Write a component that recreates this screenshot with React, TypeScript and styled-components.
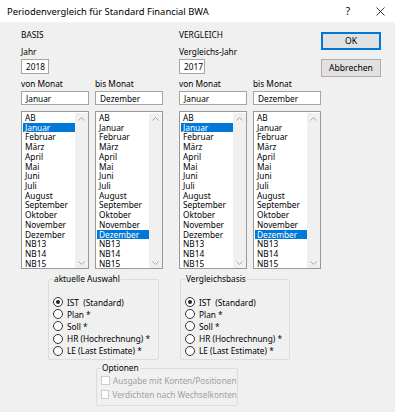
import React from "react";
import styled, { createGlobalStyle } from "styled-components";

const months = [
  "AB",
  "Januar",
  "Februar",
  "März",
  "April",
  "Mai",
  "Juni",
  "Juli",
  "August",
  "September",
  "Oktober",
  "November",
  "Dezember",
  "NB13",
  "NB14",
  "NB15",
];

const bases = [
  "IST  (Standard)",
  "Plan *",
  "Soll *",
  "HR (Hochrechnung) *",
  "LE (Last Estimate) *",
];

const GlobalStyle = createGlobalStyle`
  html, body {
    margin: 0;
    padding: 0;
    background: #f0f0f0;
  }
  body {
    font-family: "Noto Sans", "Liberation Sans", sans-serif;
    color: #000;
  }
`;

const Dialog = styled.div`
  width: 395px;
  height: 412px;
  background: #f0f0f0;
  overflow: hidden;
  font-size: 8.3px;
`;

const TitleBar = styled.div`
  height: 22px;
  background: #fff;
  display: flex;
  align-items: center;
`;

const Title = styled.div`
  flex: 1;
  padding-left: 7px;
  font-size: 9.4px;
`;

const TitleButton = styled.div<{ $w: number }>`
  width: ${({ $w }) => $w}px;
  height: 22px;
  display: flex;
  align-items: center;
  justify-content: center;
  font-size: 10px;
`;

const Body = styled.div`
  padding: 7px 0 0 21px;
`;

const Top = styled.div`
  display: flex;
`;

const Section = styled.div`
  width: 141px;
  display: flex;
  flex-direction: column;

  & + & {
    margin-left: 17px;
  }
`;

const Label = styled.div`
  height: 12px;
  line-height: 12px;
  white-space: nowrap;
`;

const Pair = styled.div`
  display: flex;
  gap: 6px;
`;

const Field = styled.div`
  width: 68px;
`;

const TextBox = styled.div<{ $w?: number; $h?: number }>`
  box-sizing: border-box;
  width: ${({ $w }) => ($w ? `${$w}px` : "68px")};
  height: ${({ $h }) => ($h ? `${$h}px` : "14px")};
  background: #fff;
  border: 1px solid #a5a5a5;
  padding-left: 4px;
  display: flex;
  align-items: center;
  margin-top: 1px;
`;

const Caret = styled.span`
  display: inline-block;
  width: 1px;
  height: 10px;
  background: #000;
  margin-left: 1px;
`;

const ListBox = styled.div`
  box-sizing: border-box;
  width: 68px;
  height: 158px;
  margin-top: 6px;
  background: #fff;
  border: 1px solid #999;
  display: flex;
  padding: 1px 0 0 1px;
`;

const Items = styled.div`
  flex: 1;
`;

const Item = styled.div<{ $selected?: boolean }>`
  height: 9.73px;
  line-height: 9.73px;
  padding-left: 2px;
  white-space: nowrap;
  background: ${({ $selected }) => ($selected ? "#0078d7" : "transparent")};
  color: ${({ $selected }) => ($selected ? "#fff" : "#000")};
`;

const ScrollBar = styled.div`
  width: 13px;
  background: #f0f0f0;
  display: flex;
  flex-direction: column;
  justify-content: space-between;
  align-items: center;
  padding: 4px 0 3px;
`;

const Buttons = styled.div`
  display: flex;
  flex-direction: column;
  gap: 9px;
  padding-top: 3px;
  margin-left: 1px;
`;

const Button = styled.div<{ $default?: boolean }>`
  box-sizing: border-box;
  width: 60px;
  height: 18px;
  display: flex;
  align-items: center;
  justify-content: center;
  background: #e1e1e1;
  border: 1px solid ${({ $default }) => ($default ? "#0078d7" : "#adadad")};
  box-shadow: ${({ $default }) => ($default ? "inset 0 0 0 1px #0078d7" : "none")};
  font-size: 8.6px;
`;

const GroupRow = styled.div`
  display: flex;
  gap: 21px;
  margin: 4px 0 0 27px;
`;

const Group = styled.fieldset<{ $w: number; $h: number }>`
  box-sizing: border-box;
  width: ${({ $w }) => $w}px;
  height: ${({ $h }) => $h}px;
  margin: 0;
  padding: 0 0 0 4px;
  border: 1px solid #dcdcdc;
  border-radius: 2px;
  min-inline-size: 0;

  legend {
    padding: 0 1px;
    margin-left: 0;
    line-height: 12px;
    font-size: 8.3px;
    color: #000;
  }
`;

const RadioList = styled.div`
  padding-top: 11px;
`;

const RadioRow = styled.div`
  height: 12.2px;
  display: flex;
  align-items: center;
  gap: 4px;
  white-space: pre;
`;

const Radio = styled.span<{ $checked?: boolean }>`
  box-sizing: border-box;
  width: 10px;
  height: 10px;
  border-radius: 50%;
  border: 1px solid #333;
  background: #fff;
  display: flex;
  align-items: center;
  justify-content: center;

  &::after {
    content: "";
    width: 4px;
    height: 4px;
    border-radius: 50%;
    background: ${({ $checked }) => ($checked ? "#222" : "transparent")};
  }
`;

const Options = styled.div`
  margin: 2px 0 0 75px;
`;

const CheckRow = styled.div`
  height: 13.5px;
  display: flex;
  align-items: center;
  gap: 3px;
  color: #a0a0a0;
  white-space: nowrap;
`;

const CheckBox = styled.span`
  box-sizing: border-box;
  width: 9px;
  height: 9px;
  border: 1px solid #cccccc;
  background: #fff;
`;

const Chevron = ({ up }: { up?: boolean }) => (
  <svg width="7" height="4" viewBox="0 0 7 4">
    <path
      d={up ? "M0.5 3.5 L3.5 0.5 L6.5 3.5" : "M0.5 0.5 L3.5 3.5 L6.5 0.5"}
      fill="none"
      stroke="#a6a6a6"
      strokeWidth="1"
    />
  </svg>
);

const MonthList = ({ selected }: { selected: string }) => (
  <ListBox>
    <Items>
      {months.map((m) => (
        <Item key={m} $selected={m === selected}>
          {m}
        </Item>
      ))}
    </Items>
    <ScrollBar>
      <Chevron up />
      <Chevron />
    </ScrollBar>
  </ListBox>
);

const Column = ({
  title,
  yearLabel,
  year,
  caret,
}: {
  title: string;
  yearLabel: string;
  year: string;
  caret?: boolean;
}) => (
  <Section>
    <Label>{title}</Label>
    <Label style={{ marginTop: 5 }}>{yearLabel}</Label>
    <TextBox $w={caret ? 26 : 28} $h={15}>
      {year}
      {caret && <Caret />}
    </TextBox>
    <Pair style={{ marginTop: 4 }}>
      <Field>
        <Label>von Monat</Label>
        <TextBox>Januar</TextBox>
        <MonthList selected="Januar" />
      </Field>
      <Field>
        <Label>bis Monat</Label>
        <TextBox>Dezember</TextBox>
        <MonthList selected="Dezember" />
      </Field>
    </Pair>
  </Section>
);

const RadioGroup = ({ legend, w }: { legend: string; w: number }) => (
  <Group $w={w} $h={87}>
    <legend>{legend}</legend>
    <RadioList>
      {bases.map((b, i) => (
        <RadioRow key={b}>
          <Radio $checked={i === 0} />
          {b}
        </RadioRow>
      ))}
    </RadioList>
  </Group>
);

const App: React.FC = () => (
  <>
    <GlobalStyle />
    <Dialog>
      <TitleBar>
        <Title>Periodenvergleich für Standard Financial BWA</Title>
        <TitleButton $w={34}>?</TitleButton>
        <TitleButton $w={30}>
          <svg width="9" height="9" viewBox="0 0 9 9">
            <path d="M0.5 0.5 L8.5 8.5 M8.5 0.5 L0.5 8.5" stroke="#222" strokeWidth="0.9" />
          </svg>
        </TitleButton>
      </TitleBar>
      <Body>
        <Top>
          <Column title="BASIS" yearLabel="Jahr" year="2018" />
          <Column title="VERGLEICH" yearLabel="Vergleichs-Jahr" year="2017" caret />
          <Buttons>
            <Button $default>OK</Button>
            <Button>Abbrechen</Button>
          </Buttons>
        </Top>
        <GroupRow>
          <RadioGroup legend="aktuelle Auswahl" w={111} />
          <RadioGroup legend="Vergleichsbasis" w={110} />
        </GroupRow>
        <Options>
          <Group $w={142} $h={44}>
            <legend>Optionen</legend>
            <CheckRow>
              <CheckBox />
              Ausgabe mit Konten/Positionen
            </CheckRow>
            <CheckRow>
              <CheckBox />
              Verdichten nach Wechselkonten
            </CheckRow>
          </Group>
        </Options>
      </Body>
    </Dialog>
  </>
);

export default App;
